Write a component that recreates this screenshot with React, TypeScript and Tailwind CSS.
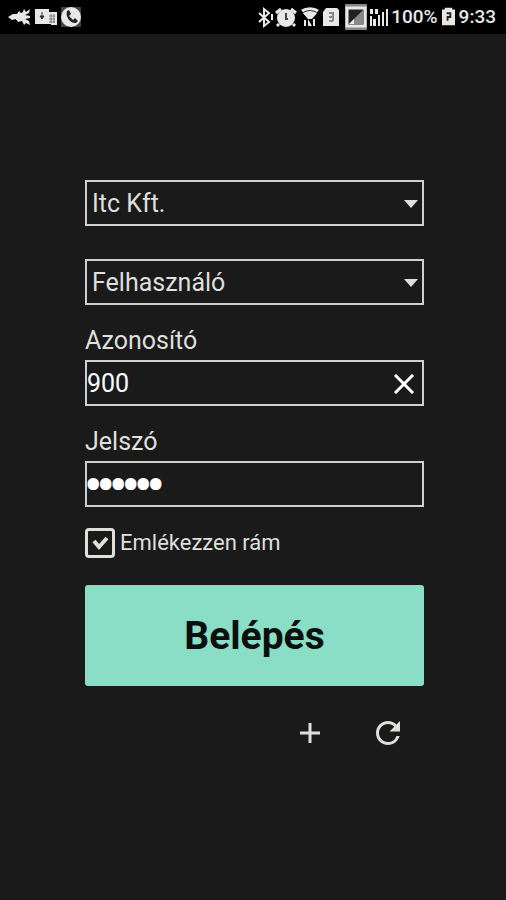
import { useState } from 'react';
import { MdRefresh } from 'react-icons/md';

const companies = ['Itc Kft.'];
const roles = ['Felhasználó'];

function StatusBar() {
  return (
    <header className="flex h-[34px] items-center justify-between bg-black pl-2 pr-[10px] text-[#e8e8e8]">
      {/* Notification icons */}
      <div className="flex items-center gap-1">
        <svg width="23" height="20" viewBox="0 0 23 20" fill="currentColor">
          <path d="M0 10l5-3 4 0 2-3 3 3 2-5 2 3 4-3-1 4-4 2 5 1v2l-5 1 4 2 1 4-4-2-2 2-2-4-4 1-2-3-4 1z" />
          <path d="M7 8l9-3v9l-8-1z" />
        </svg>
        <svg width="22" height="20" viewBox="0 0 22 20" fill="currentColor">
          <path d="M0 2h14v3h8v13h-6v-1H0z" />
          <path d="M7 5v6M5 9l2 3 2-3z" stroke="#333" fill="#333" />
          <path d="M16 7v9M19 7v9M14 9h6M14 12h6M14 15h6" stroke="#777" fill="none" />
        </svg>
        <svg width="20" height="20" viewBox="0 0 20 20" fill="currentColor">
          <path d="M0 0h20v20H0z" fill="#444" />
          <circle cx="10" cy="10" r="10" />
          <path d="M6 4l2-1 2 4-2 2 4 4 2-2 3 3-2 2C10 17 4 10 6 4z" fill="#222" />
        </svg>
      </div>

      {/* System icons */}
      <div className="flex items-center text-[19px] font-medium leading-5">
        <svg width="134" height="26" viewBox="258 4 134 26" fill="currentColor">
          <g stroke="currentColor" strokeWidth="2" fill="none">
            <path d="M260 13l10 9-5 4V9l5 4-10 9M273 14v6" />
            <path d="M277 13l5-4M297 13l-5-4M280 24l-2 2M294 24l2 2" strokeWidth="3" />
            <path d="M303 11c4-3 12-3 16 0M305 14c3-2 9-2 12 0" strokeWidth="3" />
          </g>
          <circle cx="287" cy="18" r="9" />
          <path d="M287 13v6h2" stroke="#444" strokeWidth="2" fill="none" />
          <path d="M304 13h14l-5 6h-4zM305 20h2v6h-2zM309 19l4 7h-4zM314 19h2v7h-2z" />
          <path d="M324 12l3-4h11l2 2v16h-16z" />
          <path d="M330 13h4v8M330 17h4M330 21h4" stroke="#888" strokeWidth="2" fill="none" />
          <path d="M346 4h22v26h-22z" fill="#888" />
          <path d="M348 8h18v18h-18z" fill="#222" stroke="currentColor" strokeWidth="3" />
          <path d="M364 10v14h-14z" fill="#888" />
          <path d="M350 24l5-5v5z" />
          <path d="M371 9h3v5h-3zM376 9h3v5h-3zM371 16h2v10h-2zM374 19h3v7h-3zM379 15h2v11h-2zM383 12h2v14h-2zM387 9h2v17h-2z" />
        </svg>
        <span>100%</span>
        <svg width="13" height="20" viewBox="0 0 14 20" className="mx-1" fill="currentColor">
          <path d="M0 2h3V0h8v2h3v17H0z" />
          <path d="M5 6h4v4H6v4" stroke="#222" strokeWidth="2" fill="none" />
        </svg>
        <time>9:33</time>
      </div>
    </header>
  );
}

function Dropdown({ label, options }: { label: string; options: string[] }) {
  return (
    <div className="relative">
      <select
        aria-label={label}
        className="block h-[46px] w-full appearance-none border-2 border-[#cfcfcc] bg-transparent px-[5px] pt-[2px] text-[25px]"
      >
        {options.map((option) => (
          <option key={option}>{option}</option>
        ))}
      </select>
      <svg
        className="pointer-events-none absolute right-[6px] top-5"
        width="14"
        height="8"
        viewBox="0 0 14 8"
        fill="currentColor"
      >
        <path d="M0 0h14L7 8z" />
      </svg>
    </div>
  );
}

export default function App() {
  const [userId, setUserId] = useState('900');
  const [password, setPassword] = useState('secret');
  const [remember, setRemember] = useState(true);

  return (
    <div className="min-h-screen bg-[#1a1a1b] font-['Roboto',sans-serif] text-[#dfdfdc]">
      <StatusBar />

      <form
        className="flex flex-col pl-[85px] pr-[82px] pt-[146px] text-[25px] leading-8"
        onSubmit={(e) => e.preventDefault()}
      >
        <div className="flex flex-col gap-[33px]">
          <Dropdown label="Cég" options={companies} />
          <Dropdown label="Szerepkör" options={roles} />
        </div>

        {/* User id */}
        <label htmlFor="userId" className="mb-[3px] mt-5">Azonosító</label>
        <div className="relative">
          <input
            id="userId"
            type="text"
            value={userId}
            onChange={(e) => setUserId(e.target.value)}
            className="block h-[46px] w-full border-2 border-[#cfcfcc] bg-transparent text-white"
          />
          <button
            type="button"
            aria-label="Törlés"
            onClick={() => setUserId('')}
            className="absolute right-[10px] top-[14px] text-white"
          >
            <svg width="20" height="20" viewBox="0 0 20 20" fill="none" stroke="currentColor" strokeWidth="3">
              <path d="M1 1l18 18M19 1L1 19" />
            </svg>
          </button>
        </div>

        {/* Password */}
        <label htmlFor="password" className="mb-[3px] mt-5">Jelszó</label>
        <input
          id="password"
          type="password"
          value={password}
          onChange={(e) => setPassword(e.target.value)}
          className="block h-[46px] w-full border-2 border-[#cfcfcc] bg-transparent pt-[2px] text-[37px] text-white [-webkit-text-stroke:4px_white]"
        />

        <label className="mt-5 flex items-center gap-[5px] text-[22px]">
          <span className="relative flex">
            <input
              type="checkbox"
              checked={remember}
              onChange={(e) => setRemember(e.target.checked)}
              className="size-[30px] appearance-none rounded-[4px] border-3 border-[#dfdfdc]"
            />
            {remember && (
              <svg
                className="pointer-events-none absolute inset-0"
                width="30"
                height="30"
                viewBox="0 0 30 30"
                fill="none"
                stroke="currentColor"
                strokeWidth="4"
              >
                <path d="M9 13l5 6 8-9" />
              </svg>
            )}
          </span>
          Emlékezzen rám
        </label>

        <button
          type="submit"
          className="mt-[26px] h-[101px] rounded-[3px] bg-[#8adec6] text-[39px] font-bold text-[#0b0f0e]"
        >
          Belépés
        </button>

        {/* Add and reload */}
        <div className="mt-[29px] flex items-center justify-end gap-[46px] pr-[18px]">
          <button type="button" aria-label="Hozzáadás">
            <svg width="28" height="28" viewBox="0 0 28 28" fill="none" stroke="currentColor" strokeWidth="3">
              <path d="M14 4v20M4 14h20" />
            </svg>
          </button>
          <button type="button" aria-label="Frissítés">
            <MdRefresh size={36} />
          </button>
        </div>
      </form>
    </div>
  );
}
